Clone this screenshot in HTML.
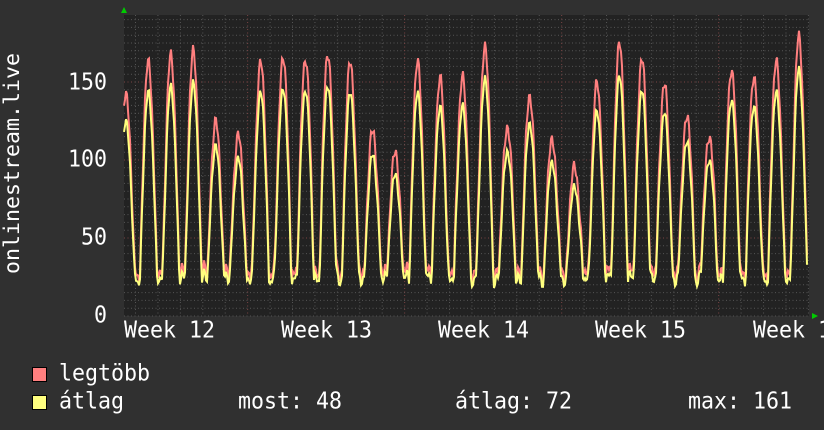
<!DOCTYPE html>
<html><head><meta charset="utf-8"><style>
html,body{margin:0;padding:0;background:#303030;}
body{width:824px;height:430px;overflow:hidden;position:relative;font-family:"DejaVu Sans Mono","Liberation Mono",monospace;color:#fff;}
.t{position:absolute;font-size:21.6px;line-height:1;white-space:pre;transform:scaleY(1.05);transform-origin:0 50%;}
.sq{position:absolute;width:13px;height:13px;}
</style></head><body>
<svg id="g" width="824" height="430" style="position:absolute;left:0;top:0">
<rect x="124" y="15" width="685" height="301" fill="#222222"/>
<g id="grid"></g>
<polyline id="mx" fill="none" stroke="#ff7f7f" stroke-width="2"/>
<polyline id="av" fill="none" stroke="#ffff7f" stroke-width="2"/>
<polygon points="121,13 127,13 124,7" fill="#00cc00"/>
<polygon points="812,313 812,319 818,316" fill="#00cc00"/>
</svg>
<div class="t" style="left:2px;top:274px;transform-origin:0 0;transform:rotate(-90deg);width:270px">onlinestream.live</div>
<div class="t" style="right:717px;top:72px">150</div>
<div class="t" style="right:717px;top:149px">100</div>
<div class="t" style="right:717px;top:227px">50</div>
<div class="t" style="right:717px;top:305px">0</div>
<div class="t" style="left:124px;top:320px">Week 12</div>
<div class="t" style="left:281px;top:320px">Week 13</div>
<div class="t" style="left:438px;top:320px">Week 14</div>
<div class="t" style="left:595px;top:320px">Week 15</div>
<div class="t" style="left:753px;top:320px">Week 16</div>
<div class="sq" style="left:32px;top:367px;background:#ff7f7f;border:1px solid #000"></div>
<div class="sq" style="left:32px;top:395px;background:#ffff7f;border:1px solid #000"></div>
<div class="t" style="left:59px;top:363px">legtöbb</div>
<div class="t" style="left:59px;top:391px">átlag</div>
<div class="t" style="left:238px;top:391px">most: 48</div>
<div class="t" style="left:455px;top:391px">átlag: 72</div>
<div class="t" style="left:688px;top:391px">max: 161</div>
<script>
var g=document.getElementById('grid'),h='';
for(var i=0;i<39;i++){var y=316-i*7.8;var maj=(i%10==0);
h+='<line x1="124" x2="809" y1="'+y+'" y2="'+y+'" stroke="'+(maj&&i>0?'#7a4444':'#555')+'" stroke-dasharray="1,2.5" stroke-width="1"/>';}
for(var x=135.5;x<809;x+=22.43){var wk=Math.abs(((x-247)/157)-Math.round((x-247)/157))<0.02;
h+='<line y1="15" y2="316" x1="'+x+'" x2="'+x+'" stroke="'+(wk?'#7a4444':'#555')+'" stroke-dasharray="1,2.5"/>';}
g.innerHTML=h;
var peaks=[140,160,163,165,120,112,160,163,162,165,160,115,100,158,148,150,170,118,138,110,92,145,170,160,145,125,112,155,150,160,175,150];
var m=[],a=[];
function sc(v){return 316-v*1.56;}
for(var x=124;x<=807;x++){
 var d=(x-126)/22.43,k=Math.floor(d),t=d-k,p,tt;
 if(t>0.5){p=peaks[Math.min(k+1,peaks.length-1)];tt=t-1;}else{p=peaks[Math.max(0,k)];tt=t;}
 var w=Math.abs(tt);
 var f=w<0.38?Math.pow(Math.cos(w/0.38*Math.PI/2),1.1):0;
 var n=Math.sin(x*1.7)*3+Math.sin(x*0.53)*2;
 var tr=24+Math.sin(x*0.9)*3;
 m.push(x+','+sc(tr+4+(p-tr)*f+n));
 a.push(x+','+sc(tr+(p*0.9-tr)*f+n*0.7));
}
document.getElementById('mx').setAttribute('points',m.join(' '));
document.getElementById('av').setAttribute('points',a.join(' '));
</script>
</body></html>
